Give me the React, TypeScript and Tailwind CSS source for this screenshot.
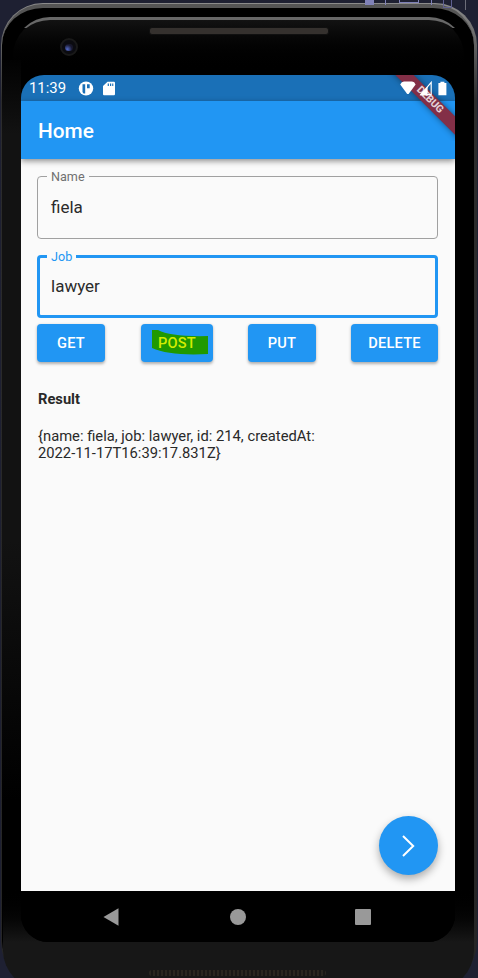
import React from "react";

function StatusBar() {
  return (
    <div className="flex h-[26px] items-center bg-[#1a70b7] pl-[8px] pr-[8px] text-white">
      <span className="w-[39px] whitespace-nowrap pt-px text-[14.9px] leading-none">11:39</span>
      <svg className="ml-[10px] h-[15px] w-[16px]" viewBox="0 0 16 15">
        <ellipse cx="8" cy="7.5" rx="7.2" ry="7" fill="#fff" />
        <path d="M4.5 3.3h2.7v9.3H5.5L4.5 11zM9 3.3h2.7v4H9z" fill="#1a70b7" />
      </svg>
      <svg className="ml-[9px] h-[15px] w-[12px]" viewBox="0 0 12 15">
        <path d="M4.5.7H11q1 0 1 1V13q0 1.2-1 1.2H1q-1 0-1-1V5z" fill="#fff" />
        <path d="M4.7 2.6h1.2v2.3H4.7zm2.3 0h1.2v2.3H7zm2.2 0h1.1v2.3H9.2z" fill="#1a70b7" />
      </svg>
      <div className="relative z-10 ml-auto flex items-center">
        <svg className="h-[14px] w-[16px]" viewBox="0 0 16 14">
          <path d="M.2 3.6Q1.5.6 4 .6h8q2.5 0 3.6 3L8.6 13H7.2z" fill="#fff" />
        </svg>
        <svg className="ml-[3px] h-[15px] w-[13px]" viewBox="0 0 13 15">
          <path d="M1.8 13.6 12.2 1.4v12.2z" fill="none" stroke="#fff" strokeWidth="1.2" />
          <path d="M.8 14.2 8.6 5.4v8.8z" fill="#fff" />
        </svg>
        <svg className="ml-[6px] h-[15px] w-[9px]" viewBox="0 0 9 15">
          <path d="M.4 2h2V.8h4V2h2v12.2h-8z" fill="#fff" />
        </svg>
      </div>
    </div>
  );
}

function DebugBanner() {
  return (
    <div className="absolute top-0 right-0 h-[66px] w-[68px] overflow-hidden">
      <div className="absolute top-[18.5px] left-[-7px] flex h-[13px] w-[100px] rotate-45 items-center justify-center bg-[#832f47] text-[10.4px] leading-none font-bold text-white/80 shadow-[0_0_6px_rgba(0,0,0,0.45)]">
        <span className="pr-px">DEBUG</span>
      </div>
    </div>
  );
}

function Field({ label, value, focused }: { label: string; value: string; focused?: boolean }) {
  return (
    <fieldset
      className={
        focused
          ? "mt-[10px] h-[69px] rounded-[4px] border-[3px] border-[#2196f3] pl-[7px]"
          : "h-[70px] rounded-[4px] border border-[#a0a0a0] pl-[9px]"
      }
    >
      <legend
        className={
          focused
            ? "h-[15px] px-[4px] text-[12.6px] leading-[15px] text-[#2196f3]"
            : "h-[15px] px-[4px] text-[12.6px] leading-[15px] text-[#707070]"
        }
      >
        {label}
      </legend>
      <div
        className={
          focused
            ? "mt-[11px] pl-[4px] text-[17px] leading-[22px] text-[#2b2b2b]"
            : "mt-[12px] pl-[4px] text-[17px] leading-[22px] text-[#2b2b2b]"
        }
      >
        {value}
      </div>
    </fieldset>
  );
}

const buttonBase =
  "relative flex h-[38px] items-center justify-center rounded-[4px] bg-[#2196f3] pt-px text-[14.6px] font-medium tracking-[0.2px] shadow-[0_1.5px_3px_rgba(0,0,0,0.3)]";

function Actions() {
  return (
    <div className="mt-[6px] flex text-white">
      <button className={buttonBase + " w-[68px]"}>GET</button>
      <button className={buttonBase + " ml-[36px] w-[72px] text-[#d4ed00]"}>
        <svg className="absolute top-[5px] left-[11px] h-[26px] w-[57px]" viewBox="0 0 57 26">
          <path d="M0 1h6Q19 8 56 7v18Q18 27 0 19z" fill="#209900" />
        </svg>
        <span className="relative">POST</span>
      </button>
      <button className={buttonBase + " ml-[35px] w-[68px]"}>PUT</button>
      <button className={buttonBase + " ml-auto w-[87px]"}>DELETE</button>
    </div>
  );
}

function NavigationBar() {
  return (
    <div className="flex h-[51px] items-center bg-black pl-[82px] pt-[1px]">
      <svg className="h-[18px] w-[16px]" viewBox="0 0 16 18">
        <path d="M.5 9 15.5.3v17.4z" fill="#999" />
      </svg>
      <div className="ml-[111px] h-[16px] w-[16px] rounded-full bg-[#999]" />
      <div className="ml-[109px] h-[16px] w-[16px] rounded-[1px] bg-[#999]" />
    </div>
  );
}

function Screen() {
  return (
    <div className="relative flex h-[867px] w-[434px] flex-col overflow-hidden rounded-t-[23px] rounded-b-[27px] bg-black">
      <StatusBar />
      <div className="relative flex h-[58px] items-center bg-[#2196f3] pl-[17px] pt-[3px] text-[20.8px] font-medium text-white shadow-[0_2px_6px_rgba(0,0,0,0.45)]">
        Home
      </div>
      <div className="flex-1 bg-[#fafafa] pr-[17px] pl-[16px] pt-[10px] text-[#292929]">
        <Field label="Name" value="fiela" />
        <Field label="Job" value="lawyer" focused />
        <Actions />
        <h2 className="mt-[28px] pl-px text-[14.7px] leading-[18px] font-bold">Result</h2>
        <p className="mt-[20px] pl-px text-[14.75px] leading-[17px]">
          {"{name: fiela, job: lawyer, id: 214, createdAt:"}
          <br />
          {"2022-11-17T16:39:17.831Z}"}
        </p>
      </div>
      <NavigationBar />
      <button className="absolute right-[17px] bottom-[67px] flex h-[59px] w-[59px] items-center justify-center rounded-full bg-[#2196f3] shadow-[0_4px_8px_rgba(0,0,0,0.32)]">
        <svg className="h-[22px] w-[13px]" viewBox="0 0 13 22">
          <path d="M1 1 11.2 11 1 21" fill="none" stroke="#fff" strokeWidth="2" />
        </svg>
      </button>
      <DebugBanner />
    </div>
  );
}

export default function App() {
  return (
    <div className="relative h-[978px] w-[478px] overflow-hidden bg-[#1e2032] font-['Roboto',sans-serif]">
      {/* Editor window visible behind the device */}
      <div className="absolute top-0 right-[12px] flex h-[10px] w-[101px]">
        <div className="h-[5px] w-[9px] bg-[#8082b8]" />
        <div className="ml-[11px] h-[5px] w-px bg-[#8082b8]" />
        <div className="ml-[13px] h-[3px] w-[20px] border border-t-0 border-[#8082b8]" />
        <div className="ml-[12px] h-[5px] w-px bg-[#8082b8]" />
        <div className="ml-[11px] h-[8px] w-[9px] border border-t-0 border-[#5e6090]" />
        <div className="ml-auto h-[10px] w-px bg-[#6c6d79]" />
      </div>
      {/* Device body */}
      <div className="ml-px h-[983px] w-[476px] overflow-hidden rounded-t-[42px] rounded-b-[44px] bg-linear-to-b from-[#8c8c8c] via-[#2c2c2c] via-10% to-[#252525] pt-px mt-[3px] pr-[3px] pl-[1px]">
        <div className="h-[975px] rounded-t-[41px] rounded-b-[38px] border-t-[4px] border-[#555] bg-black pt-[10px]">
          <div className="mx-auto h-[960px] w-[451px] rounded-t-[38px] bg-linear-to-b from-[#141414] to-black to-[57px]" />
        </div>
      </div>
      <div className="absolute top-[17px] left-[14px] h-[11px] w-[451px] overflow-hidden">
        <div className="h-[60px] rounded-t-[36px] border-t-[3px] border-[#686868]" />
      </div>
      <div className="absolute top-[60px] left-[2px] h-[740px] w-[19px] bg-[linear-gradient(180deg,#020202,#121212_10%,#121212_65%,#000)]" />
      <div className="absolute top-[942px] left-[3px] h-[48px] w-[471px] rounded-b-[40px] bg-[#171717]" />
      <div className="absolute top-[885px] left-[3px] h-[57px] w-[471px] bg-linear-to-b from-black to-[#171717]" />
      <div className="absolute top-[27px] left-[149px] h-[8px] w-[180px] rounded-[3px] border border-[#101010] bg-[#35312e]" />
      <div className="absolute top-[970px] left-[149px] h-[6px] w-[177px] rounded-[3px] bg-[repeating-linear-gradient(90deg,#292620_0_2px,#191816_2px_4px)]" />
      <div className="absolute top-[38px] left-[60px] flex h-[18px] w-[18px] items-center justify-center rounded-full border-2 border-[#191919] bg-[#0b0b10]">
        <div className="h-[7px] w-[8px] rounded-full bg-[radial-gradient(circle_at_30%_75%,#5368c5,#17172c_60%)]" />
      </div>
      <div className="absolute top-[75px] left-[21px]">
        <Screen />
      </div>
    </div>
  );
}
